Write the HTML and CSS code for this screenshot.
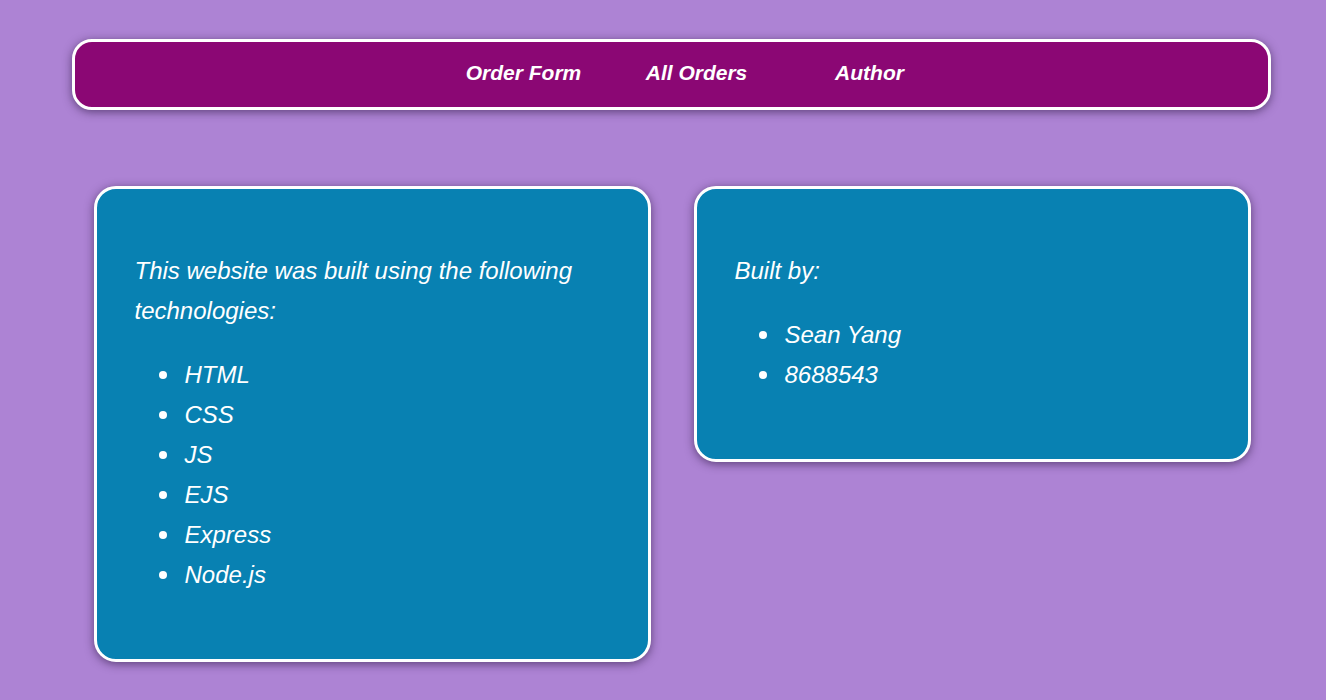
FILE: index.html
```html
<!DOCTYPE html>
<html lang="en">
<head>
<meta charset="utf-8">
<title>Author</title>
<link rel="stylesheet" href="styles.css">
</head>
<body>
<div class="page">
  <nav class="nav">
    <ul class="nav-list">
      <li><a class="nav-link" href="#">Order Form</a></li>
      <li><a class="nav-link" href="#">All Orders</a></li>
      <li><a class="nav-link" href="#">Author</a></li>
    </ul>
  </nav>
  <main class="cards">
    <section class="card">
      <p class="card-text">This website was built using the following technologies:</p>
      <ul class="card-list">
        <li>HTML</li>
        <li>CSS</li>
        <li>JS</li>
        <li>EJS</li>
        <li>Express</li>
        <li>Node.js</li>
      </ul>
    </section>
    <section class="card">
      <p class="card-text">Built by:</p>
      <ul class="card-list">
        <li>Sean Yang</li>
        <li>8688543</li>
      </ul>
    </section>
  </main>
</div>
</body>
</html>
```

FILE: styles.css
```css
html, body {
  margin: 0;
  padding: 0;
}

body {
  background: #ad83d4;
  font-family: "Liberation Sans", Arial, sans-serif;
  font-style: italic;
  color: #ffffff;
}

.page {
  padding: 39px 0 38px 16px;
}

.nav {
  width: 1199px;
  height: 71px;
  margin: 0 auto;
  box-sizing: border-box;
  background: #8b0774;
  border: 3px solid #ffffff;
  border-radius: 20px;
  box-shadow: 0 2px 10px rgba(40, 20, 60, 0.6);
  display: flex;
  align-items: center;
  justify-content: center;
}

.nav-list {
  list-style: none;
  margin: 0;
  padding: 0 0 3px 51px;
  display: flex;
}

.nav-list li {
  width: 173px;
  text-align: center;
}

.nav-link {
  color: #ffffff;
  text-decoration: none;
  font-weight: bold;
  font-size: 21px;
}

.cards {
  display: grid;
  grid-template-columns: 557px 557px;
  column-gap: 43px;
  justify-content: center;
  align-items: start;
  margin-top: 76px;
  padding-left: 2px;
}

.card {
  box-sizing: border-box;
  background: #0881b2;
  border: 3px solid #ffffff;
  border-radius: 22px;
  box-shadow: 0 2px 10px rgba(40, 20, 60, 0.6);
  padding: 38px 38px 40px 38px;
}

.card-text {
  margin: 24px 0;
  font-size: 24px;
  line-height: 40px;
}

.card-list {
  list-style: none;
  margin: 24px 0;
  padding-left: 24px;
  font-size: 24px;
  line-height: 40px;
}

.card-list li {
  display: flex;
  align-items: center;
}

.card-list li::before {
  content: "";
  width: 8px;
  height: 8px;
  border-radius: 50%;
  background: #ffffff;
  margin-right: 18px;
  flex: none;
}
```
